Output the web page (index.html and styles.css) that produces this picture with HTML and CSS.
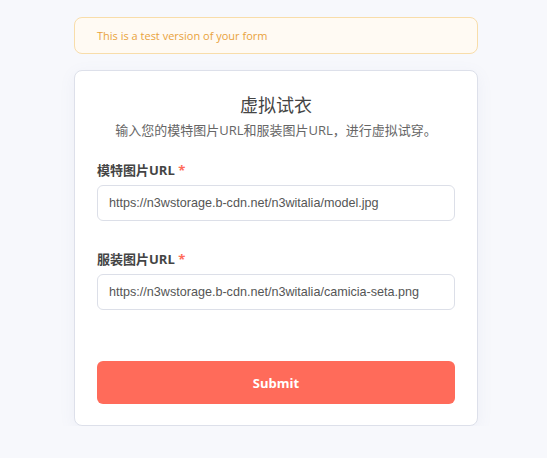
FILE: index.html
```html
<!DOCTYPE html>
<html lang="en">

<head>
    <meta charset="UTF-8">
    <meta name="viewport" content="width=device-width, initial-scale=1.0">
    <title>虚拟试衣</title>
    <link rel="stylesheet" href="styles.css">
</head>

<body>
    <div class="page">
        <div class="test-banner">This is a test version of your form</div>

        <form class="form-card">
            <h1>虚拟试衣</h1>
            <p class="subtitle">输入您的模特图片URL和服装图片URL，进行虚拟试穿。</p>

            <div class="field">
                <label for="model">模特图片URL <span class="req">*</span></label>
                <input type="text" id="model" value="https://n3wstorage.b-cdn.net/n3witalia/model.jpg">
            </div>

            <div class="field">
                <label for="garment">服装图片URL <span class="req">*</span></label>
                <input type="text" id="garment" value="https://n3wstorage.b-cdn.net/n3witalia/camicia-seta.png">
            </div>

            <button type="button" class="submit-btn">Submit</button>
        </form>
    </div>
</body>

</html>
```

FILE: styles.css
```css
body {
    margin: 0;
    padding: 17px 0 0 74px;
    background-color: #f7f8fc;
    font-family: 'Open Sans', 'Noto Sans CJK SC', sans-serif;
    color: #444;
}

.page {
    width: 404px;
    display: flex;
    flex-direction: column;
    gap: 16px;
}

.test-banner {
    box-sizing: border-box;
    height: 37px;
    display: flex;
    align-items: center;
    padding-left: 22px;
    background-color: #fffaf3;
    border: 1px solid #f8ddaa;
    border-radius: 8px;
    color: #e9a23b;
    font-size: 11px;
}

.form-card {
    box-sizing: border-box;
    background-color: white;
    border: 1px solid #dde0ea;
    border-radius: 8px;
    padding: 20px 22px 21px;
    box-shadow: 0px 4px 16px rgba(120, 130, 180, 0.08);
    display: flex;
    flex-direction: column;
}

.form-card h1 {
    margin: 0;
    font-size: 18px;
    line-height: 26px;
    font-weight: 400;
    text-align: center;
    color: #444;
    font-family: 'Noto Sans CJK SC', sans-serif;
}

.subtitle {
    margin: 3px 0 0;
    font-size: 13px;
    line-height: 20px;
    text-align: center;
    color: #666;
}

.field {
    display: flex;
    flex-direction: column;
    margin-top: 20px;
}

.field + .field {
    margin-top: 28px;
}

.field label {
    font-size: 13px;
    line-height: 20px;
    font-weight: bold;
    color: #444;
    margin-bottom: 5px;
}

.req {
    color: #ff6b5a;
}

.field input {
    box-sizing: border-box;
    height: 36px;
    padding: 0 11px;
    border: 1px solid #dcdfe8;
    border-radius: 6px;
    font-family: 'Liberation Sans', Arial, sans-serif;
    font-size: 12.6px;
    color: #555;
    outline: none;
}

.submit-btn {
    margin-top: 51px;
    height: 43px;
    border: none;
    border-radius: 6px;
    background-color: #ff6b5a;
    color: white;
    font-family: inherit;
    font-size: 13px;
    font-weight: bold;
    cursor: pointer;
}
```
